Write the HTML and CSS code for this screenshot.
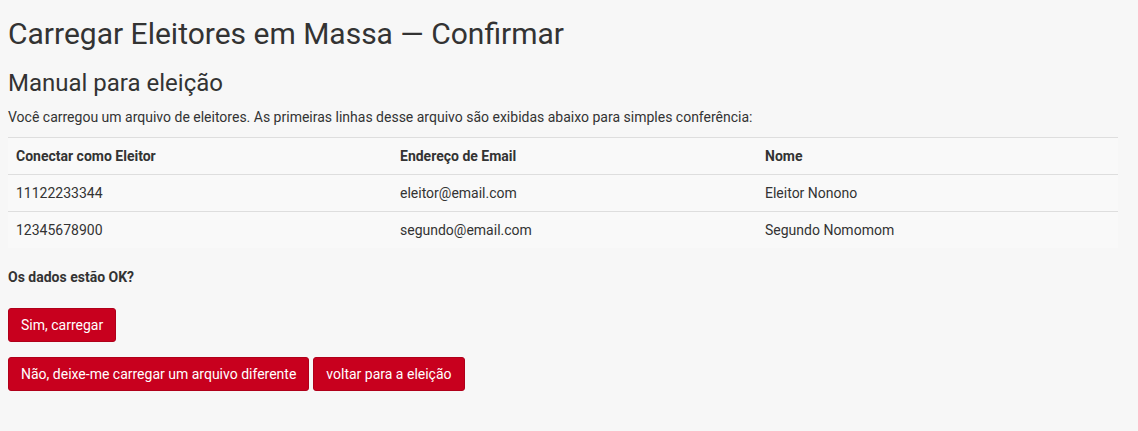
FILE: index.html
```html
<!DOCTYPE html>
<html lang="pt-BR">
<head>
    <meta charset="UTF-8">
    <meta name="viewport" content="width=device-width, initial-scale=1.0">
    <title>Carregar Eleitores em Massa — Confirmar</title>
    <link rel="stylesheet" href="styles.css">
</head>
<body>

    <div class="page">
        <h1>Carregar Eleitores em Massa — Confirmar</h1>
        <h2>Manual para eleição</h2>

        <p class="intro">Você carregou um arquivo de eleitores. As primeiras linhas desse arquivo são exibidas abaixo para simples conferência:</p>

        <!-- PREVIEW TABLE -->
        <table class="voters">
            <thead>
                <tr>
                    <th class="col-id">Conectar como Eleitor</th>
                    <th class="col-email">Endereço de Email</th>
                    <th class="col-name">Nome</th>
                </tr>
            </thead>
            <tbody>
                <tr>
                    <td>11122233344</td>
                    <td>eleitor@email.com</td>
                    <td>Eleitor Nonono</td>
                </tr>
                <tr>
                    <td>12345678900</td>
                    <td>segundo@email.com</td>
                    <td>Segundo Nomomom</td>
                </tr>
            </tbody>
        </table>

        <p class="question">Os dados estão OK?</p>

        <div class="actions">
            <button class="btn">Sim, carregar</button>
        </div>
        <div class="actions">
            <button class="btn">Não, deixe-me carregar um arquivo diferente</button>
            <button class="btn">voltar para a eleição</button>
        </div>
    </div>

</body>
</html>
```

FILE: styles.css
```css
* {
    margin: 0;
    padding: 0;
    box-sizing: border-box;
}

body {
    background: #f7f7f7;
    color: #333;
    font-family: Roboto, "Liberation Sans", sans-serif;
    font-size: 14px;
    line-height: 21px;
}

.page { padding: 0 8px; }

h1 {
    font-size: 30px;
    font-weight: 400;
    line-height: 36px;
    margin-top: 16px;
}

h2 {
    font-size: 24px;
    font-weight: 400;
    line-height: 1.2;
    margin-top: 17px;
}

.intro { margin-top: 9px; }

/* PREVIEW TABLE */
.voters {
    width: 1110px;
    margin-top: 9px;
    border-collapse: collapse;
    background: #f9f9f9;
    table-layout: fixed;
}

.voters th,
.voters td {
    padding: 8px;
    line-height: 20px;
    text-align: left;
    border-top: 1px solid #dedede;
}

.voters th { font-weight: 700; }

.col-id { width: 384px; }
.col-email { width: 365px; }

.question {
    font-weight: 700;
    margin-top: 19px;
}

.actions {
    display: flex;
    gap: 4px;
    margin-top: 20px;
}

.actions + .actions { margin-top: 15px; }

.btn {
    background: #c8001e;
    color: #fff;
    border: 1px solid #b0001a;
    border-radius: 3px;
    padding: 6px 12px;
    font-family: inherit;
    font-size: 14px;
    line-height: 20px;
    cursor: pointer;
}

.btn:hover { background: #a80019; }
```
